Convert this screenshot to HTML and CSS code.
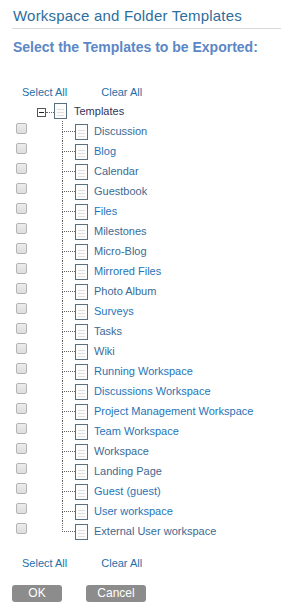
FILE: index.html
```html
<!DOCTYPE html>
<html lang="en">
<head>
	<meta charset="UTF-8">
	<title>Workspace and Folder Templates</title>
	<link rel="stylesheet" href="styles.css">
</head>
<body>
	<h1 class="title">Workspace and Folder Templates</h1>
	<h2 class="subtitle">Select the Templates to be Exported:</h2>

	<div class="links links-top">
		<a class="link">Select All</a>
		<a class="link">Clear All</a>
	</div>

	<div class="tree">
		<div class="root">
			<span class="toggle"></span>
			<span class="stub"></span>
			<span class="doc"></span>
			<span class="label root-label">Templates</span>
		</div>
		<ul class="items">
			<li class="row"><span class="chk"></span><span class="branch"><i></i><b></b></span><span class="doc"></span><span class="label dim">Discussion</span></li>
			<li class="row"><span class="chk"></span><span class="branch"><i></i><b></b></span><span class="doc"></span><span class="label">Blog</span></li>
			<li class="row"><span class="chk"></span><span class="branch"><i></i><b></b></span><span class="doc"></span><span class="label dim">Calendar</span></li>
			<li class="row"><span class="chk"></span><span class="branch"><i></i><b></b></span><span class="doc"></span><span class="label dim">Guestbook</span></li>
			<li class="row"><span class="chk"></span><span class="branch"><i></i><b></b></span><span class="doc"></span><span class="label">Files</span></li>
			<li class="row"><span class="chk"></span><span class="branch"><i></i><b></b></span><span class="doc"></span><span class="label dim">Milestones</span></li>
			<li class="row"><span class="chk"></span><span class="branch"><i></i><b></b></span><span class="doc"></span><span class="label dim">Micro-Blog</span></li>
			<li class="row"><span class="chk"></span><span class="branch"><i></i><b></b></span><span class="doc"></span><span class="label">Mirrored Files</span></li>
			<li class="row"><span class="chk"></span><span class="branch"><i></i><b></b></span><span class="doc"></span><span class="label dim">Photo Album</span></li>
			<li class="row"><span class="chk"></span><span class="branch"><i></i><b></b></span><span class="doc"></span><span class="label">Surveys</span></li>
			<li class="row"><span class="chk"></span><span class="branch"><i></i><b></b></span><span class="doc"></span><span class="label dim">Tasks</span></li>
			<li class="row"><span class="chk"></span><span class="branch"><i></i><b></b></span><span class="doc"></span><span class="label dim">Wiki</span></li>
			<li class="row"><span class="chk"></span><span class="branch"><i></i><b></b></span><span class="doc"></span><span class="label">Running Workspace</span></li>
			<li class="row"><span class="chk"></span><span class="branch"><i></i><b></b></span><span class="doc"></span><span class="label">Discussions Workspace</span></li>
			<li class="row"><span class="chk"></span><span class="branch"><i></i><b></b></span><span class="doc"></span><span class="label">Project Management Workspace</span></li>
			<li class="row"><span class="chk"></span><span class="branch"><i></i><b></b></span><span class="doc"></span><span class="label">Team Workspace</span></li>
			<li class="row"><span class="chk"></span><span class="branch"><i></i><b></b></span><span class="doc"></span><span class="label dim">Workspace</span></li>
			<li class="row"><span class="chk"></span><span class="branch"><i></i><b></b></span><span class="doc"></span><span class="label dim">Landing Page</span></li>
			<li class="row"><span class="chk"></span><span class="branch"><i></i><b></b></span><span class="doc"></span><span class="label">Guest (guest)</span></li>
			<li class="row"><span class="chk"></span><span class="branch"><i></i><b></b></span><span class="doc"></span><span class="label">User workspace</span></li>
			<li class="row last"><span class="chk"></span><span class="branch"><i></i><b></b></span><span class="doc"></span><span class="label dim">External User workspace</span></li>
		</ul>
	</div>

	<div class="links links-bottom">
		<a class="link">Select All</a>
		<a class="link">Clear All</a>
	</div>

	<div class="buttons">
		<button class="btn btn-ok">OK</button>
		<button class="btn btn-cancel">Cancel</button>
	</div>
</body>
</html>
```

FILE: styles.css
```css
*{
    margin: 0;
    padding: 0;
    box-sizing: border-box;
}
body{
    background: #fff;
    font-family: "Liberation Sans", Arial, sans-serif;
    font-size: 11px;
    color: #333;
}
.title{
    margin-left: 12px;
    padding: 9px 0 6px 1px;
    font-size: 15px;
    font-weight: normal;
    line-height: 13px;
    letter-spacing: 0.2px;
    color: #2d6e9c;
    border-bottom: 1px solid #dadada;
}
.subtitle{
    margin: 10px 0 0 13px;
    font-size: 14px;
    line-height: 16px;
    font-weight: bold;
    color: #5b87c6;
}

/* select / clear */
.links{
    display: flex;
    padding-left: 22px;
    height: 14px;
    line-height: 14px;
}
.links-top{
    margin-top: 30px;
}
.links-bottom{
    margin-top: 15px;
}
.link{
    color: #1f6fa8;
    cursor: pointer;
}
.link + .link{
    margin-left: 34px;
}

/* tree */
.tree{
    margin-top: 2px;
}
.root{
    display: flex;
    align-items: center;
    height: 20px;
    padding-left: 37px;
}
.toggle{
    position: relative;
    width: 9px;
    height: 9px;
    margin-top: 3px;
    border: 1px solid #555;
    background: #fff;
}
.toggle::after{
    content: "";
    position: absolute;
    left: 1px;
    top: 3px;
    width: 5px;
    height: 1px;
    background: #222;
}
.stub{
    width: 8px;
    margin-top: 3px;
    border-top: 1px dotted #666;
}
.root .label{
    margin-left: 7px;
}
.root .root-label{
    color: #33335a;
}
.items{
    list-style: none;
}
.row{
    display: flex;
    align-items: center;
    height: 20px;
}
.chk{
    width: 11px;
    height: 11px;
    margin: -5px 0 0 16px;
    border: 1px solid #b4b4b4;
    border-radius: 2px;
    background: linear-gradient(#ececec, #dedede);
}
.branch{
    align-self: stretch;
    display: flex;
    flex-direction: column;
    width: 13px;
    margin-left: 35px;
}
.branch i{
    height: 11px;
    border-left: 1px dotted #666;
    border-bottom: 1px dotted #666;
}
.branch b{
    flex: 1;
    border-left: 1px dotted #666;
}
.last .branch b{
    border-left: 0;
}
.doc{
    width: 13px;
    height: 16px;
    border: 1px solid #5a6f7e;
    background-color: #fcfcfc;
    background-image: repeating-linear-gradient(#fcfcfc 0, #fcfcfc 2px, #dedede 2px, #dedede 3px);
    background-size: 7px 9px;
    background-position: 2px 3px;
    background-repeat: no-repeat;
}
.row .doc{
    margin-top: 2px;
}
.label{
    margin-left: 6px;
    line-height: 14px;
    color: #1f74b8;
}
.label.dim{
    color: #3d6a93;
}

/* buttons */
.buttons{
    display: flex;
    margin: 15px 0 0 12px;
}
.btn{
    height: 17px;
    border: 0;
    border-radius: 3px;
    background: #8c8c8c;
    color: #fff;
    font-family: "Liberation Sans", Arial, sans-serif;
    font-size: 12px;
    line-height: 17px;
}
.btn-ok{
    width: 50px;
}
.btn-cancel{
    width: 60px;
    margin-left: 24px;
}
```
